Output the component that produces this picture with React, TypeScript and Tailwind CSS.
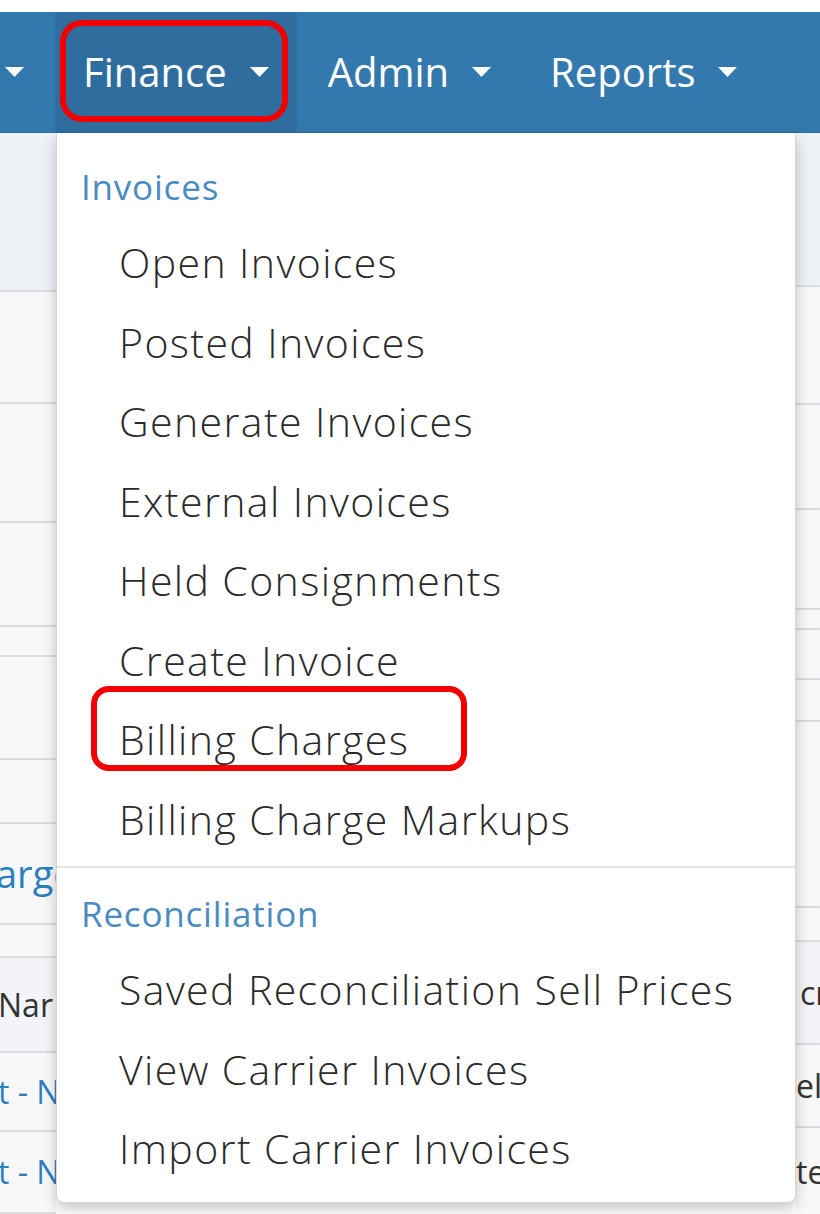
import { ReactNode } from 'react';

const font = { fontFamily: '"Open Sans", "Noto Sans", sans-serif' };

function Caret() {
  return (
    <svg width="19" height="10" viewBox="0 0 19 10" className="shrink-0">
      <path d="M0 0 L19 0 L9.5 10 Z" fill="#ffffff" />
    </svg>
  );
}

function NavItem({ label, active, boxed }: { label: string; active?: boolean; boxed?: boolean }) {
  return (
    <div
      className={`relative flex items-center gap-[23px] h-full pl-[28px] pr-[28px] ${
        active ? 'bg-[#2f6d9f]' : 'ml-[3px]'
      }`}
    >
      <span className="text-[40px] text-white leading-none">{label}</span>
      <Caret />
      {boxed && (
        <div className="absolute left-[5px] top-[8px] w-[228px] h-[102px] border-[6px] border-[#f20000] rounded-[22px]" />
      )}
    </div>
  );
}

type Row = { h: number; bg?: string; text?: ReactNode };

const leftRows: Row[] = [
  { h: 159, bg: 'bg-[#eef1f6]' },
  { h: 112 },
  { h: 119 },
  { h: 104 },
  { h: 30 },
  { h: 103 },
  { h: 64 },
  { h: 101, text: <span className="text-[38px] text-[#2a7fc1] -ml-[4px]">arge</span> },
  { h: 33 },
  { h: 95, bg: 'bg-[#f3f4f7]', text: <span className="text-[32px] text-[#333] -ml-[2px]">Nar</span> },
  { h: 79, text: <span className="text-[32px] text-[#2a7fc1] -ml-[2px]">t - N</span> },
  { h: 82, text: <span className="text-[32px] text-[#2a7fc1] -ml-[2px]">t - N</span> },
];

const rightRows: Row[] = [
  { h: 154, bg: 'bg-[#eef1f6]' },
  { h: 118 },
  { h: 105 },
  { h: 100 },
  { h: 20 },
  { h: 50 },
  { h: 42 },
  { h: 186 },
  { h: 34 },
  { h: 103, bg: 'bg-[#f3f4f7]', text: <span className="text-[32px] text-[#333] ml-[4px]">cr</span> },
  { h: 83, text: <span className="text-[32px] text-[#333]">el</span> },
  { h: 90, text: <span className="text-[32px] text-[#333]">te</span> },
];

function Strip({ rows, className }: { rows: Row[]; className: string }) {
  return (
    <div className={`flex flex-col overflow-hidden ${className}`}>
      {rows.map((r, i) => (
        <div
          key={i}
          className={`shrink-0 flex items-center overflow-hidden whitespace-nowrap border-b-2 border-[#d9dce1] ${r.bg ?? 'bg-[#f8f8f8]'}`}
          style={{ height: r.h }}
        >
          {r.text}
        </div>
      ))}
    </div>
  );
}

function Header({ children }: { children: string }) {
  return (
    <div className="h-[72px] flex items-center pl-[24px] text-[35px] tracking-[0.8px] text-[#4a8bc2]">
      {children}
    </div>
  );
}

function Item({ label, boxed }: { label: string; boxed?: boolean }) {
  return (
    <div className="relative h-[79.5px] flex items-center pl-[62px] text-[41px] tracking-[1.4px] font-light text-[#2b2b2b] whitespace-nowrap">
      {label}
      {boxed && (
        <div className="absolute left-[34px] top-[-14px] w-[376px] h-[85px] border-[6px] border-[#f20000] rounded-[18px]" />
      )}
    </div>
  );
}

const invoices = [
  'Open Invoices',
  'Posted Invoices',
  'Generate Invoices',
  'External Invoices',
  'Held Consignments',
  'Create Invoice',
  'Billing Charges',
  'Billing Charge Markups',
];

const reconciliation = [
  'Saved Reconciliation Sell Prices',
  'View Carrier Invoices',
  'Import Carrier Invoices',
];

export default function App() {
  return (
    <div className="relative w-[820px] h-[1214px] overflow-hidden bg-white" style={font}>
      <div className="h-[12px] bg-white" />
      <nav className="h-[121px] flex bg-[#3479ad] border-b border-[#2c6a9a]">
        <div className="flex items-center h-full pl-[5px] w-[55px]">
          <Caret />
        </div>
        <NavItem label="Finance" active boxed />
        <NavItem label="Admin" />
        <NavItem label="Reports" />
      </nav>

      <div className="flex justify-between">
        <Strip rows={leftRows} className="w-[56px]" />
        <Strip rows={rightRows} className="w-[24px]" />
      </div>

      {/* Finance dropdown */}
      <div className="absolute left-[56px] top-[133px] w-[740px] bg-white border border-[#d4d4d4] border-t-0 rounded-b-[8px] shadow-[0_6px_14px_rgba(0,0,0,0.22)] pt-[18px] pb-[13px]">
        <Header>Invoices</Header>
        {invoices.map((label) => (
          <Item key={label} label={label} boxed={label === 'Billing Charges'} />
        ))}
        <div className="mt-[7px] h-[2px] bg-[#e6e6e6]" />
        <div className="mt-[10px]">
          <Header>Reconciliation</Header>
        </div>
        {reconciliation.map((label) => (
          <Item key={label} label={label} />
        ))}
      </div>
    </div>
  );
}
